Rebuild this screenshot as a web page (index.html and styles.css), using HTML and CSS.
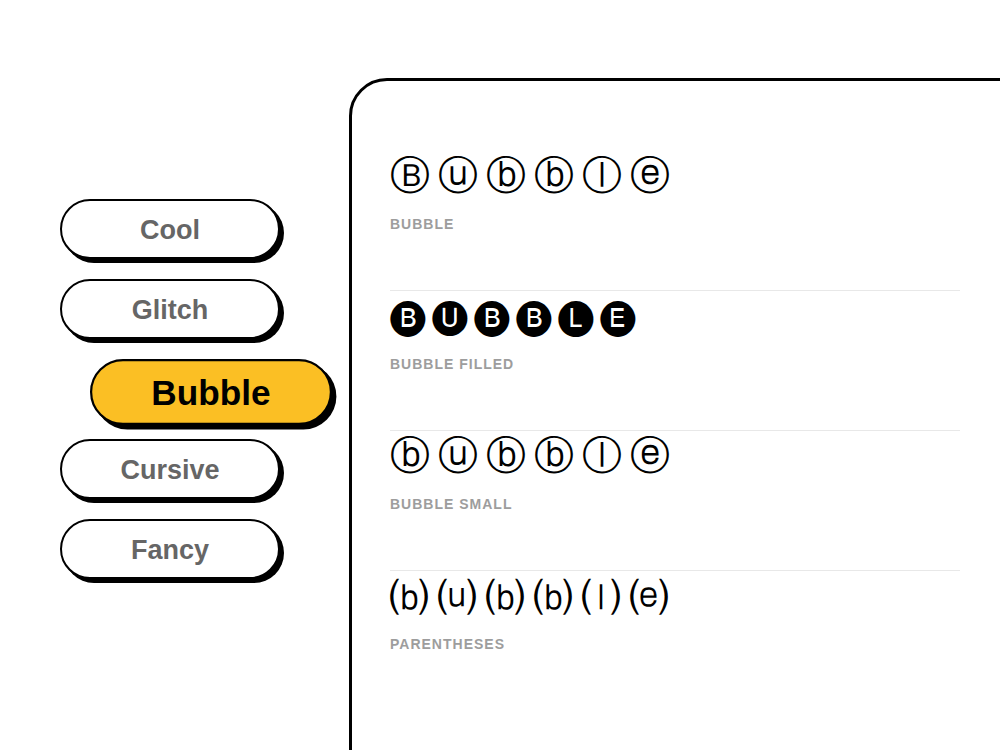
FILE: index.html
```html
<!DOCTYPE html>
<html lang="en">
<head>
<meta charset="utf-8">
<title>Fancy Text</title>
<link rel="stylesheet" href="styles.css">
</head>
<body>
<div class="page">
  <nav class="nav">
    <button class="nav-btn">Cool</button>
    <button class="nav-btn">Glitch</button>
    <button class="nav-btn active">Bubble</button>
    <button class="nav-btn">Cursive</button>
    <button class="nav-btn">Fancy</button>
  </nav>
  <main class="panel">
    <div class="row">
      <div class="glyphs circled">Ⓑⓤⓑⓑⓛⓔ</div>
      <div class="label">BUBBLE</div>
    </div>
    <div class="row">
      <div class="glyphs filled">🅑🅤🅑🅑🅛🅔</div>
      <div class="label">BUBBLE FILLED</div>
    </div>
    <div class="row">
      <div class="glyphs circled">ⓑⓤⓑⓑⓛⓔ</div>
      <div class="label">BUBBLE SMALL</div>
    </div>
    <div class="row">
      <div class="glyphs paren">⒝⒰⒝⒝⒧⒠</div>
      <div class="label">PARENTHESES</div>
    </div>
  </main>
</div>
</body>
</html>
```
FILE: styles.css
```css
html, body {
  margin: 0;
  padding: 0;
  background: #ffffff;
  overflow: hidden;
}
body {
  font-family: "Liberation Sans", Arial, sans-serif;
}
.page {
  display: flex;
  align-items: flex-start;
  width: 1003px;
  height: 750px;
}
.nav {
  display: flex;
  flex-direction: column;
  gap: 20px;
  padding: 199px 0 0 60px;
  width: 349px;
  box-sizing: border-box;
  flex: none;
}
.nav-btn {
  width: 220px;
  height: 60px;
  box-sizing: border-box;
  border: 2px solid #000;
  border-radius: 30px;
  background: #fff;
  box-shadow: 4px 4px 0 #000;
  font-family: "Liberation Sans", Arial, sans-serif;
  font-weight: 700;
  font-size: 27px;
  line-height: 56px;
  padding: 1px 0 0 0;
  color: #666;
  cursor: pointer;
}
.nav-btn.active {
  background: #fbbf24;
  color: #000;
  font-size: 32px;
  transform: translate(41px, 3px) scale(1.1);
}
.panel {
  margin-top: 78px;
  flex: none;
  width: 654px;
  height: 700px;
  box-sizing: border-box;
  border: 3px solid #000;
  border-radius: 38px 0 0 0;
  padding: 70px 40px 0 38px;
}
.row {
  border-top: 1px solid #e8e8e8;
  padding-bottom: 56px;
}
.row:first-child {
  border-top: 0;
}
.glyphs {
  font-family: "DejaVu Sans", "Noto Sans", sans-serif;
  line-height: 48px;
  height: 48px;
  color: #000;
  white-space: nowrap;
}
.circled {
  font-size: 40px;
  letter-spacing: 8px;
}
.filled {
  font-size: 35px;
  letter-spacing: 6px;
}
.paren {
  font-size: 38px;
  line-height: 52px;
  letter-spacing: 10px;
}
.label {
  margin-top: 15px;
  font-size: 14px;
  line-height: 20px;
  font-weight: 700;
  letter-spacing: 1px;
  color: #9d9d9d;
}
```
